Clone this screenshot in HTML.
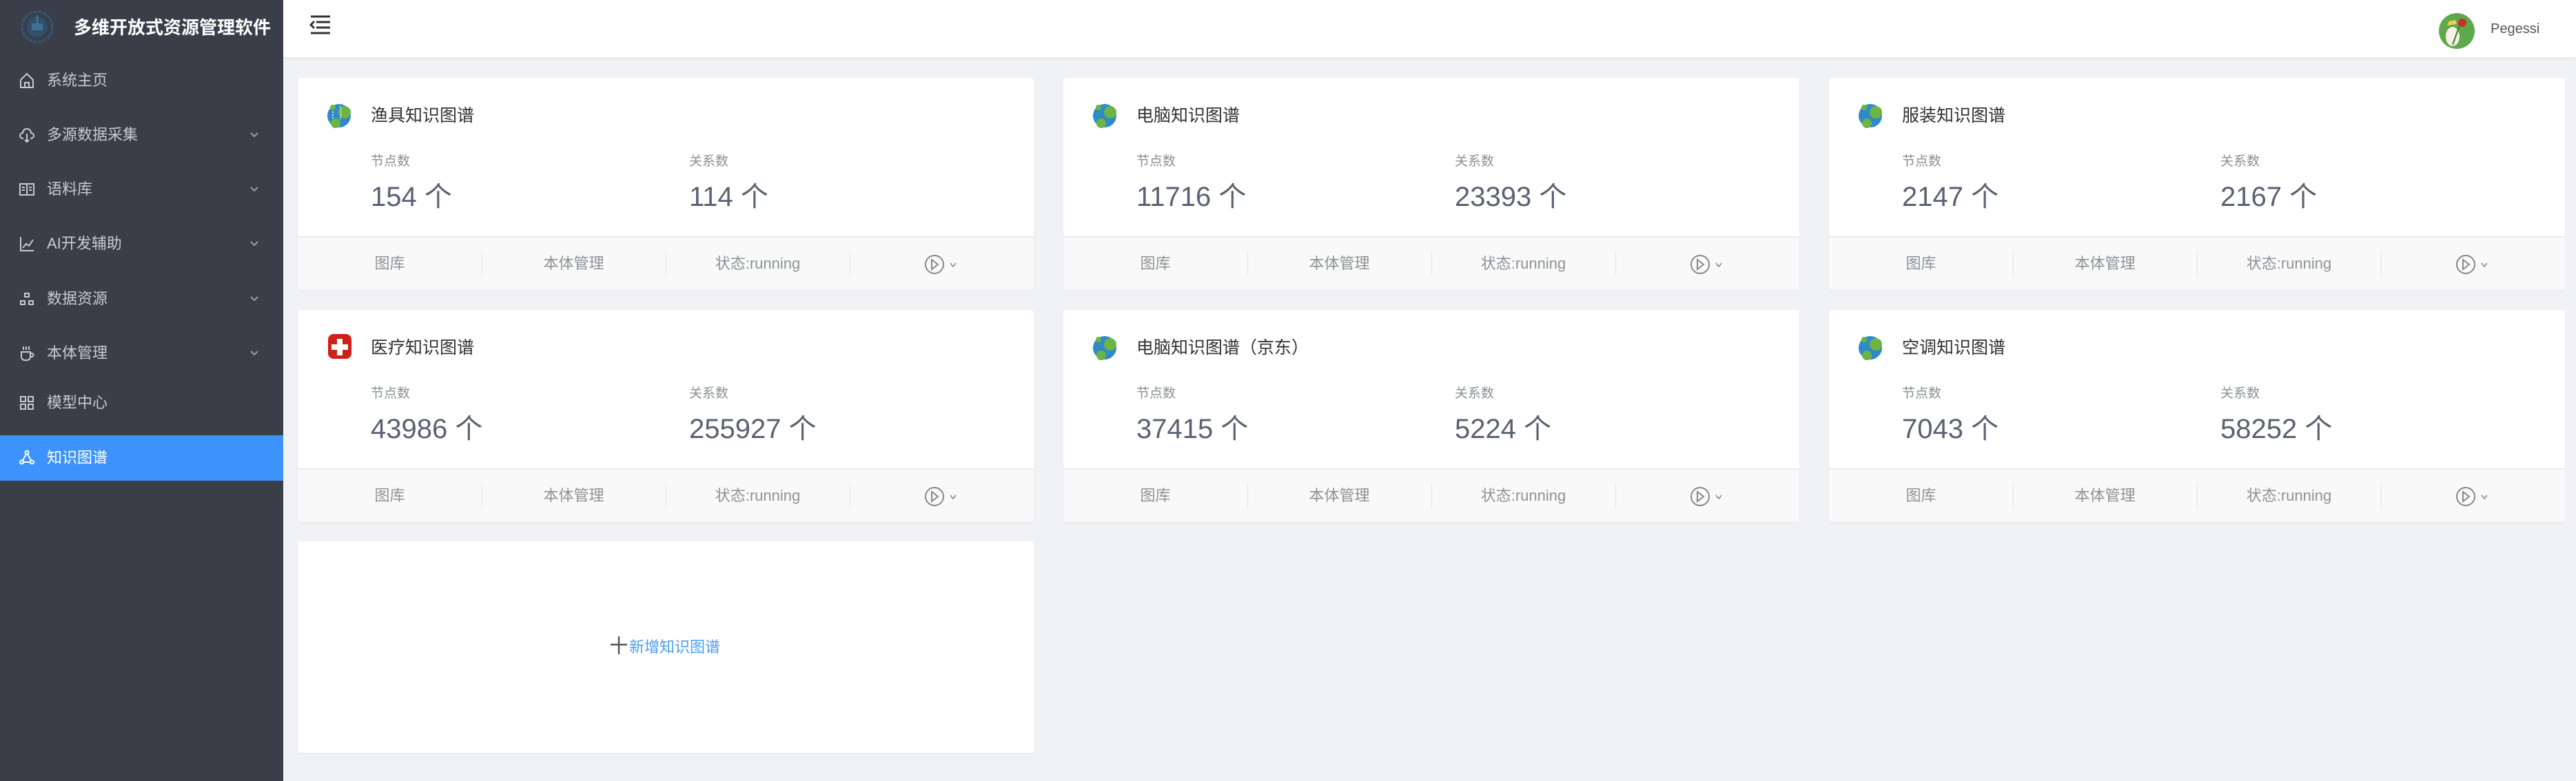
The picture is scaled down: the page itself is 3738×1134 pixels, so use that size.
<!DOCTYPE html>
<html><head><meta charset="utf-8"><style>
*{margin:0;padding:0;box-sizing:border-box}
body{width:3738px;height:1134px;background:#f0f2f5;font-family:"Liberation Sans","Noto Sans CJK SC",sans-serif;position:relative;overflow:hidden}
.side{position:absolute;left:0;top:0;width:411px;height:1134px;background:#3a3e48}
.logo{position:absolute;left:28px;top:14px;width:52px;height:50px}
.brand{position:absolute;left:107px;top:20px;color:#fff;font-weight:bold;font-size:26px;line-height:40px;white-space:nowrap}
.mi{position:absolute;left:0;width:411px;height:66px;color:#c8cbd0;font-size:22px;line-height:66px}
.mi .t{position:absolute;left:68px}
.mi svg{position:absolute;left:28px;top:21px}
.mi .ch{position:absolute;left:362px;top:28px}
.mi.act{background:#3d93fb;color:#fff}
.head{position:absolute;left:411px;top:0;right:0;height:83px;background:#fff;box-shadow:0 2px 6px rgba(0,0,0,.06)}
.card{position:absolute;width:1068px;height:308px;background:#fff;border-radius:3px;box-shadow:0 1px 3px rgba(0,0,0,.05)}
.card .ic{position:absolute;left:41px;top:35px}
.card .ti{position:absolute;left:106px;top:38px;font-size:25px;color:#303133;line-height:34px}
.card .lb{position:absolute;top:108px;font-size:19px;color:#8a8d93;line-height:28px}
.card .nm{position:absolute;top:146px;font-size:40px;color:#5a6172;line-height:54px}
.ft{position:absolute;left:0;bottom:0;width:1068px;height:78px;background:#f9f9f9;border-top:2px solid #e8eaee;display:flex}
.ft div{flex:1;text-align:center;font-size:22px;color:#8f9196;line-height:76px;position:relative}
.ft div+div:before{content:"";position:absolute;left:0;top:20px;height:36px;border-left:1px solid #e3e4e6}
</style></head><body>
<div class="side">
<svg class="logo" viewBox="0 0 52 50"><circle cx="26" cy="25" r="22" fill="none" stroke="#2c5d80" stroke-width="3" stroke-dasharray="5 2"/><circle cx="26" cy="25" r="15" fill="#2f4f6a"/><rect x="18" y="20" width="16" height="10" fill="#3f6f94"/><path d="M26 8v12" stroke="#3f6f94" stroke-width="3"/></svg>
<div class="brand">多维开放式资源管理软件</div>
<div class="mi" style="top:84px"><svg width="22" width="22" height="24" viewBox="0 0 22 24" fill="none" stroke="#c8cbd0" stroke-width="2"><path d="M2 11L11 2l9 9v11H2z M8 22v-7h6v7"/></svg><span class="t">系统主页</span></div>
<div class="mi" style="top:163px"><svg width="22" height="24" viewBox="0 0 22 24" fill="none" stroke="#c8cbd0" stroke-width="2"><path d="M6 17H5a4 4 0 010-8 6 6 0 0112 0 4 4 0 010 8h-1M11 10v12M8 19l3 3 3-3"/></svg><span class="t">多源数据采集</span><svg class="ch" width="14" height="10" viewBox="0 0 14 10" fill="none" stroke="#9a9da3" stroke-width="2"><path d="M2 2l5 5 5-5"/></svg></div>
<div class="mi" style="top:242px"><svg width="22" height="24" viewBox="0 0 22 24" fill="none" stroke="#c8cbd0" stroke-width="2"><path d="M1 4h20v16H1zM11 4v16M4 9h4M4 13h4M14 9h4M14 13h4"/></svg><span class="t">语料库</span><svg class="ch" width="14" height="10" viewBox="0 0 14 10" fill="none" stroke="#9a9da3" stroke-width="2"><path d="M2 2l5 5 5-5"/></svg></div>
<div class="mi" style="top:321px"><svg width="22" height="24" viewBox="0 0 22 24" fill="none" stroke="#c8cbd0" stroke-width="2"><path d="M2 2v20h19M5 18l5-6 4 3 6-9"/></svg><span class="t">AI开发辅助</span><svg class="ch" width="14" height="10" viewBox="0 0 14 10" fill="none" stroke="#9a9da3" stroke-width="2"><path d="M2 2l5 5 5-5"/></svg></div>
<div class="mi" style="top:401px"><svg width="22" height="24" viewBox="0 0 22 24" fill="none" stroke="#c8cbd0" stroke-width="2"><path d="M8 4h6v5H8zM2 15h6v5H2zM14 15h6v5h-6z"/></svg><span class="t">数据资源</span><svg class="ch" width="14" height="10" viewBox="0 0 14 10" fill="none" stroke="#9a9da3" stroke-width="2"><path d="M2 2l5 5 5-5"/></svg></div>
<div class="mi" style="top:480px"><svg width="22" height="24" viewBox="0 0 22 24" fill="none" stroke="#c8cbd0" stroke-width="2"><path d="M3 10h13v7a5 5 0 01-5 5H8a5 5 0 01-5-5zM16 12h2a2 2 0 010 5h-2M6 2v5M10 2v5M14 2v5"/></svg><span class="t">本体管理</span><svg class="ch" width="14" height="10" viewBox="0 0 14 10" fill="none" stroke="#9a9da3" stroke-width="2"><path d="M2 2l5 5 5-5"/></svg></div>
<div class="mi" style="top:552px"><svg width="22" height="24" viewBox="0 0 22 24" fill="none" stroke="#c8cbd0" stroke-width="2"><path d="M2 3h7v7H2zM13 3h7v7h-7zM2 14h7v7H2zM13 14h7v7h-7z"/></svg><span class="t">模型中心</span></div>
<div class="mi act" style="top:632px"><svg width="22" height="24" viewBox="0 0 22 24" fill="none" stroke="#fff" stroke-width="2"><circle cx="11" cy="4" r="2.5"/><circle cx="3.5" cy="18" r="2.5"/><circle cx="18.5" cy="18" r="2.5"/><path d="M10 6.5l-5 9M12 6.5l5 9M6 18h10"/></svg><span class="t">知识图谱</span></div>
</div>
<div class="head">
<svg style="position:absolute;left:38px;top:22px" width="30" height="28" viewBox="0 0 30 28" fill="none" stroke="#333" stroke-width="3"><path d="M2 2h28M10 10h20M10 18h20M2 26h28M7 9l-5 5 5 5"/></svg>
<svg style="position:absolute;left:3128px;top:19px" width="52" height="52" viewBox="0 0 52 52"><circle cx="26" cy="26" r="26" fill="#5fa84b"/><ellipse cx="20" cy="34" rx="10" ry="14" fill="#f6f1e6"/><path d="M12 18q3-10 8-6 4-6 6 4" fill="#f0cf4c"/><circle cx="34" cy="14" r="6" fill="#c9302c"/><path d="M30 18l-10 28" stroke="#3a7a2e" stroke-width="2"/></svg>
<div style="position:absolute;left:3203px;top:28px;font-size:20px;color:#555;line-height:28px">Pegessi</div>
</div>

<!-- cards -->
<div class="card" style="left:432px;top:113px">
<svg class="ic" width="40" height="40" viewBox="0 0 40 40"><circle cx="19" cy="20" r="17" fill="#2f8ac8"/><circle cx="27" cy="15" r="9" fill="#6cb544"/><circle cx="14" cy="31" r="7" fill="#6cb544"/><circle cx="10" cy="8" r="4" fill="#6cb544"/><path d="M10 14v12M20 6q4 8 0 20" stroke="#fff" stroke-width="1.5" stroke-dasharray="2 2" fill="none"/></svg>
<div class="ti">渔具知识图谱</div><div class="lb" style="left:106px">节点数</div><div class="lb" style="left:568px">关系数</div>
<div class="nm" style="left:106px">154 个</div><div class="nm" style="left:568px">114 个</div>
<div class="ft"><div>图库</div><div>本体管理</div><div>状态:running</div><div><svg width="52" height="30" viewBox="0 0 52 30" style="vertical-align:middle" fill="none" stroke="#888" stroke-width="2"><circle cx="15" cy="15" r="13"/><path d="M11 8l9 7-9 7z"/><path d="M38 13l4 5 4-5" stroke-width="1.5"/></svg></div></div>
</div>

<div class="card" style="left:1543px;top:113px">
<svg class="ic" width="40" height="40" viewBox="0 0 40 40"><circle cx="19" cy="20" r="17" fill="#2f8ac8"/><circle cx="27" cy="15" r="9" fill="#6cb544"/><circle cx="14" cy="31" r="7" fill="#6cb544"/><circle cx="10" cy="8" r="4" fill="#6cb544"/></svg>
<div class="ti">电脑知识图谱</div><div class="lb" style="left:106px">节点数</div><div class="lb" style="left:568px">关系数</div>
<div class="nm" style="left:106px">11716 个</div><div class="nm" style="left:568px">23393 个</div>
<div class="ft"><div>图库</div><div>本体管理</div><div>状态:running</div><div><svg width="52" height="30" viewBox="0 0 52 30" style="vertical-align:middle" fill="none" stroke="#888" stroke-width="2"><circle cx="15" cy="15" r="13"/><path d="M11 8l9 7-9 7z"/><path d="M38 13l4 5 4-5" stroke-width="1.5"/></svg></div></div>
</div>

<div class="card" style="left:2654px;top:113px">
<svg class="ic" width="40" height="40" viewBox="0 0 40 40"><circle cx="19" cy="20" r="17" fill="#2f8ac8"/><circle cx="27" cy="15" r="9" fill="#6cb544"/><circle cx="14" cy="31" r="7" fill="#6cb544"/><circle cx="10" cy="8" r="4" fill="#6cb544"/></svg>
<div class="ti">服装知识图谱</div><div class="lb" style="left:106px">节点数</div><div class="lb" style="left:568px">关系数</div>
<div class="nm" style="left:106px">2147 个</div><div class="nm" style="left:568px">2167 个</div>
<div class="ft"><div>图库</div><div>本体管理</div><div>状态:running</div><div><svg width="52" height="30" viewBox="0 0 52 30" style="vertical-align:middle" fill="none" stroke="#888" stroke-width="2"><circle cx="15" cy="15" r="13"/><path d="M11 8l9 7-9 7z"/><path d="M38 13l4 5 4-5" stroke-width="1.5"/></svg></div></div>
</div>

<div class="card" style="left:432px;top:450px">
<svg class="ic" width="40" height="40" viewBox="0 0 40 40" style="left:42px;top:33px"><rect x="2" y="2" width="34" height="36" rx="8" fill="#d0201a"/><path d="M15 9h8v8h8v8h-8v8h-8v-8H7v-8h8z" fill="#fff"/></svg>
<div class="ti">医疗知识图谱</div><div class="lb" style="left:106px">节点数</div><div class="lb" style="left:568px">关系数</div>
<div class="nm" style="left:106px">43986 个</div><div class="nm" style="left:568px">255927 个</div>
<div class="ft"><div>图库</div><div>本体管理</div><div>状态:running</div><div><svg width="52" height="30" viewBox="0 0 52 30" style="vertical-align:middle" fill="none" stroke="#888" stroke-width="2"><circle cx="15" cy="15" r="13"/><path d="M11 8l9 7-9 7z"/><path d="M38 13l4 5 4-5" stroke-width="1.5"/></svg></div></div>
</div>

<div class="card" style="left:1543px;top:450px">
<svg class="ic" width="40" height="40" viewBox="0 0 40 40"><circle cx="19" cy="20" r="17" fill="#2f8ac8"/><circle cx="27" cy="15" r="9" fill="#6cb544"/><circle cx="14" cy="31" r="7" fill="#6cb544"/><circle cx="10" cy="8" r="4" fill="#6cb544"/></svg>
<div class="ti">电脑知识图谱（京东）</div><div class="lb" style="left:106px">节点数</div><div class="lb" style="left:568px">关系数</div>
<div class="nm" style="left:106px">37415 个</div><div class="nm" style="left:568px">5224 个</div>
<div class="ft"><div>图库</div><div>本体管理</div><div>状态:running</div><div><svg width="52" height="30" viewBox="0 0 52 30" style="vertical-align:middle" fill="none" stroke="#888" stroke-width="2"><circle cx="15" cy="15" r="13"/><path d="M11 8l9 7-9 7z"/><path d="M38 13l4 5 4-5" stroke-width="1.5"/></svg></div></div>
</div>

<div class="card" style="left:2654px;top:450px">
<svg class="ic" width="40" height="40" viewBox="0 0 40 40"><circle cx="19" cy="20" r="17" fill="#2f8ac8"/><circle cx="27" cy="15" r="9" fill="#6cb544"/><circle cx="14" cy="31" r="7" fill="#6cb544"/><circle cx="10" cy="8" r="4" fill="#6cb544"/></svg>
<div class="ti">空调知识图谱</div><div class="lb" style="left:106px">节点数</div><div class="lb" style="left:568px">关系数</div>
<div class="nm" style="left:106px">7043 个</div><div class="nm" style="left:568px">58252 个</div>
<div class="ft"><div>图库</div><div>本体管理</div><div>状态:running</div><div><svg width="52" height="30" viewBox="0 0 52 30" style="vertical-align:middle" fill="none" stroke="#888" stroke-width="2"><circle cx="15" cy="15" r="13"/><path d="M11 8l9 7-9 7z"/><path d="M38 13l4 5 4-5" stroke-width="1.5"/></svg></div></div>
</div>

<div class="card" style="left:432px;top:786px;height:307px">
<svg style="position:absolute;left:453px;top:137px" width="26" height="28" viewBox="0 0 26 28" stroke="#555" stroke-width="2.5"><path d="M13 1v26M1 13h24"/></svg>
<div style="position:absolute;left:481px;top:139px;font-size:22px;color:#4a9cf5;line-height:30px">新增知识图谱</div>
</div>
</body></html>
